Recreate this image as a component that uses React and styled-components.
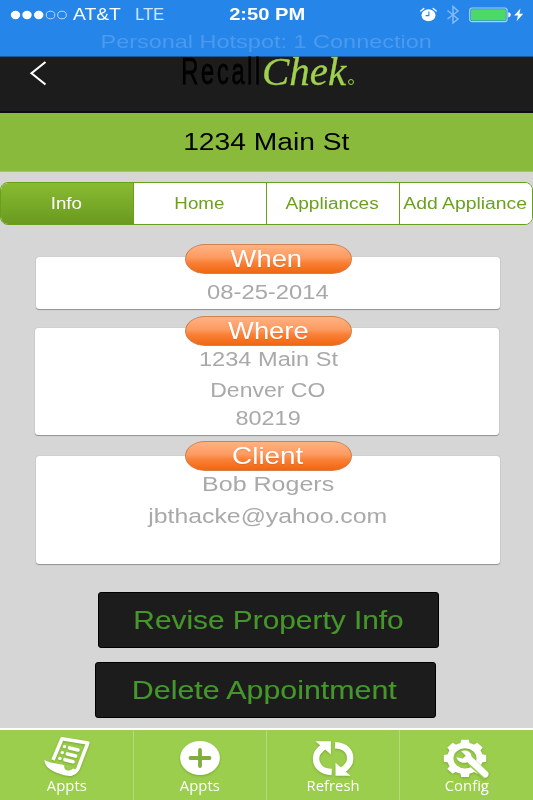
import styled, { createGlobalStyle } from "styled-components"

const GlobalStyle = createGlobalStyle`
    *{
        box-sizing:border-box;
    }
    body{
        margin:0;
        background-color:#d6d6d6;
        font-family:"Liberation Sans", Arial, sans-serif;
    }
`;
const Screen = styled.div`
    width:533px;
    height:800px;
    display:flex;
    flex-direction:column;
    overflow:hidden;
    background-color:#d6d6d6;
`;
/* wide lettering: only the glyphs are stretched, the box keeps its size */
const Label = styled.span`
    display:inline-block;
    white-space:nowrap;
    font-size:${(p) => p.$size}px;
    transform:scaleX(${(p) => p.$stretch || 1.18});
    transform-origin:${(p) => p.$origin || "center"};
`;

const StatusBar = styled.div`
    height:57px;
    flex:none;
    color:white;
    background-color:#2585e8;
    border-bottom:1px solid #1b5796;
`;
const StatusRow = styled.div`
    height:29px;
    display:grid;
    grid-template-columns:1fr auto 1fr;
    align-items:center;
    padding:0px 9px 0px 10px;
    line-height:29px;
`;
const Carrier = styled.div`
    display:flex;
    align-items:center;
    gap:5px;
`;
const Network = styled.div`
    margin-left:16px;
    color:#d3e6fb;
`;
const Clock = styled.div`
    font-weight:bold;
`;
const StatusIcons = styled.div`
    display:flex;
    align-items:center;
    justify-content:flex-end;
    svg{
        display:block;
    }
`;
const Hotspot = styled.div`
    height:27px;
    line-height:26px;
    text-align:center;
    color:#4b9aee;
`;

const Header = styled.div`
    height:56px;
    flex:none;
    display:grid;
    grid-template-columns:181px auto 1fr;
    align-items:start;
    background-color:#1c1c1c;
    border-bottom:2px solid #0d0a12;
`;
const BackButton = styled.div`
    padding:4px 0px 0px 29px;
    svg{
        display:block;
    }
`;
const Logo = styled.div`
    display:flex;
    height:30px;
    line-height:29px;
`;
const Recall = styled.div`
    width:81px;
    color:#020202;
    letter-spacing:3.6px;
    -webkit-text-stroke:0.8px #020202;
    text-shadow:-1px 0px 0px #2b2b2b;
`;
const Chek = styled.div`
    width:86px;
    color:#9fd14e;
    font-family:"Liberation Serif", serif;
    font-style:italic;
    -webkit-text-stroke:0.3px #9fd14e;
`;
const Registered = styled.div`
    width:6px;
    height:6px;
    margin-top:22px;
    border:1.5px solid #9fd14e;
    border-radius:50%;
`;

const Title = styled.div`
    height:59px;
    flex:none;
    line-height:59px;
    text-align:center;
    color:black;
    background-color:#8aba3b;
    border-bottom:1px solid #a5c070;
`;

const Tabs = styled.div`
    height:43px;
    flex:none;
    display:grid;
    grid-template-columns:133px 133px 133px 1fr;
    margin-top:10px;
    border:1px solid #69a01b;
    border-radius:8px;
    background-color:white;
    overflow:hidden;
`;
const Tab = styled.div`
    padding-right:2px;
    line-height:42px;
    text-align:center;
    color:${(p) => (p.$active ? "white" : "#6ba023")};
    background:${(p) => (p.$active ? "linear-gradient(#88bb31, #6a991f)" : "white")};
    border-right:1px solid #69a01b;
    &:last-child{
        border-right:none;
    }
`;

const Card = styled.div`
    width:464px;
    height:${(p) => p.$height}px;
    flex:none;
    display:flex;
    flex-direction:column;
    align-items:center;
    margin-top:${(p) => p.$top}px;
    margin-left:${(p) => p.$left}px;
    padding-left:${(p) => p.$shift || 0}px;
    background-color:white;
    border-radius:3px;
    box-shadow:0px 1px 1px rgb(0 0 0 / 30%), 0px 0px 1px rgb(0 0 0 / 30%);
`;
const Pill = styled.div`
    width:167px;
    height:30px;
    flex:none;
    margin-top:-${(p) => p.$lift}px;
    margin-bottom:-1px;
    padding-right:${(p) => p.$nudge || 0}px;
    line-height:28px;
    text-align:center;
    color:white;
    text-shadow:0px 1px 1px rgb(140 60 0 / 20%);
    background:linear-gradient(#ffb283 0%, #fd9a60 45%, #f98138 62%, #f26610 100%);
    border:1px solid #cf814f;
    border-radius:20px / 15px;
`;
const Line = styled.div`
    height:28px;
    flex:none;
    line-height:28px;
    margin-top:${(p) => p.$gap || 0}px;
    color:#a9a9a9;
`;

const ActionButton = styled.div`
    width:341px;
    height:56px;
    flex:none;
    margin-top:${(p) => p.$top}px;
    margin-left:${(p) => p.$left}px;
    padding-right:${(p) => p.$nudge || 0}px;
    line-height:54px;
    text-align:center;
    color:#46972b;
    -webkit-text-stroke:0.12px #46972b;
    background-color:#1c1c1c;
    border:1px solid black;
    border-radius:3px;
`;

const TabBar = styled.div`
    height:72px;
    flex:none;
    display:grid;
    grid-template-columns:134px 133px 133px 133px;
    margin-top:auto;
    border-top:2px solid white;
    background-color:#9bce4c;
`;
const TabBarItem = styled.div`
    display:flex;
    flex-direction:column;
    align-items:center;
    padding-top:6px;
    color:white;
    font-family:"Open Sans", sans-serif;
    line-height:18px;
    border-right:1px solid #b3da77;
    &:last-child{
        border-right:none;
    }
    svg{
        display:block;
        flex:none;
        margin-bottom:-3px;
        overflow:visible;
        filter:drop-shadow(0px 1px 1px rgb(60 100 0 / 35%));
    }
`;

const SignalDots = () => (
    <svg width="58" height="12" viewBox="0 0 58 12">
        {[5.5, 17, 28.7].map((x) => <ellipse key={x} cx={x} cy="6" rx="4.7" ry="4.2" fill="white" />)}
        {[40.5, 52].map((x) => <ellipse key={x} cx={x} cy="6" rx="4.3" ry="3.8" fill="none" stroke="#b9d8f9" />)}
    </svg>
)

const AlarmIcon = () => (
    <svg width="17" height="16" viewBox="0 0 17 16">
        <ellipse cx="8.5" cy="8.2" rx="7" ry="6" fill="white" />
        <path d="M0.8 4L3.8 1.4M16.2 4L13.2 1.4" stroke="white" strokeWidth="1.3" strokeLinecap="round" />
        <path d="M8.9 4.6V8.6H5.6" fill="none" stroke="#2585e8" strokeWidth="1.1" />
    </svg>
)

const BluetoothIcon = () => (
    <svg width="14" height="20" viewBox="0 0 14 20" style={{ marginLeft: 9 }}>
        <path d="M1.5 5.5L12 14L7 18V1.5L12 6L1.5 14" fill="none" stroke="#83baf3" strokeWidth="1.5" />
    </svg>
)

const BatteryIcon = () => (
    <svg width="42" height="16" viewBox="0 0 42 16" style={{ marginLeft: 9 }}>
        <rect x="0.7" y="1" width="37.4" height="13.6" rx="2.4" fill="#2585e8" stroke="#a6cdf7" strokeWidth="1.2" />
        <rect x="2" y="2.2" width="34.8" height="11.2" rx="1" fill="#4cd964" />
        <path d="M39.3 5.3Q41.8 5.7 41.8 7.8T39.3 10.3Z" fill="white" />
    </svg>
)

const BoltIcon = () => (
    <svg width="10" height="14" viewBox="0 0 10 14" style={{ marginLeft: 3 }}>
        <path d="M6.5 0.5L0.2 7.6H4L2.6 13.3L9.2 5.8H5.3Z" fill="white" />
    </svg>
)

const ScrollIcon = () => (
    <svg width="48" height="44" viewBox="0 0 48 44">
        <path d="M10 24L19 2.8L44.8 7L35 32.5Q32.5 37.8 26 38" fill="none" stroke="white" strokeWidth="3.6" strokeLinejoin="round" />
        <path d="M1.4 23.8C6 27.5 14 27 21.3 29.2C20.5 34.5 26 36.5 30 32.5L35.5 34.5C32 40 27 40.7 23 39.6C15 37.5 1.5 33.8 1.4 23.8Z" fill="white" />
        <path d="M26.5 11.9L35 14M24.3 18L32.6 20.1M22 23.7L30 25.7" stroke="white" strokeWidth="3.6" strokeLinecap="round" />
        <path d="M21.4 10.6h.2M19.2 16.6h.2M16.8 22.4h.2" stroke="white" strokeWidth="3.4" strokeLinecap="round" />
    </svg>
)

const PlusIcon = () => (
    <svg width="48" height="44" viewBox="0 0 48 44">
        <ellipse cx="24" cy="22" rx="19.9" ry="17" fill="white" />
        <path d="M14.5 22H33.5M24 14V30" stroke="#7fae3c" strokeWidth="3.8" strokeLinecap="round" />
    </svg>
)

const RefreshIcon = () => (
    <svg width="48" height="44" viewBox="0 0 48 44">
        <path d="M22.7 36C12 35.6 7 29.5 7 22.5C7 18 9 14.5 15 10.5" fill="none" stroke="white" strokeWidth="6.4" />
        <path d="M6.4 5.2H21.9V18.5Z" fill="white" />
        <path d="M26 9.2C36.5 9.7 41.2 15.5 41.2 22.5C41.2 27 39.3 30.5 33.2 34.5" fill="none" stroke="white" strokeWidth="6.4" />
        <path d="M26.5 26.7V39.8H41.6Z" fill="white" />
    </svg>
)

const GearIcon = () => (
    <svg width="48" height="44" viewBox="0 0 48 44">
        <g transform="translate(22 22.3) scale(1.14 1)">
            <circle r="12.9" fill="none" stroke="white" strokeWidth="5.6" />
            {[0, 45, 90, 135, 180, 225, 270, 315].map((a) => (
                <path key={a} d="M-4.4 -13L-3.4 -18.6H3.4L4.4 -13Z" transform={`rotate(${a})`} fill="white" />
            ))}
        </g>
        <path d="M27 25L44 40" stroke="#9bce4c" strokeWidth="8.5" />
        <path d="M18 15C22 13.5 28.5 15 28.5 20.5L45 36.3Q46.5 39 44 41.2Q42 42.3 40.5 40.8L24.5 26.3C19.5 28 14 25.5 13.6 21.3L19.8 22.6L22.7 19.8Z" fill="white" />
    </svg>
)

const tabs = [
    { name: "Info", stretch: 1.17 },
    { name: "Home", stretch: 1.17 },
    { name: "Appliances", stretch: 1.19 },
    { name: "Add Appliance", stretch: 1.21 },
]

const menu = [
    { name: "Appts", Icon: ScrollIcon },
    { name: "Appts", Icon: PlusIcon },
    { name: "Refresh", Icon: RefreshIcon },
    { name: "Config", Icon: GearIcon },
]

const App = () => {
    return (
        <Screen>
            <GlobalStyle />
            <StatusBar>
                <StatusRow>
                    <Carrier>
                        <SignalDots />
                        <Label $size={16.5} $stretch={1.17} $origin="left">AT&amp;T</Label>
                        <Network><Label $size={16.5} $stretch={1} $origin="left">LTE</Label></Network>
                    </Carrier>
                    <Clock><Label $size={16.5} $stretch={1.22}>2:50 PM</Label></Clock>
                    <StatusIcons>
                        <AlarmIcon />
                        <BluetoothIcon />
                        <BatteryIcon />
                        <BoltIcon />
                    </StatusIcons>
                </StatusRow>
                <Hotspot><Label $size={19} $stretch={1.235}>Personal Hotspot: 1 Connection</Label></Hotspot>
            </StatusBar>
            <Header>
                <BackButton>
                    <svg width="20" height="26" viewBox="0 0 20 26">
                        <path d="M16.5 1L2.5 12.3L16.5 23.5" fill="none" stroke="white" strokeWidth="2.1" />
                    </svg>
                </BackButton>
                <Logo>
                    <Recall><Label $size={36} $stretch={0.67} $origin="left">Recall</Label></Recall>
                    <Chek><Label $size={39} $stretch={1.05} $origin="left">Chek</Label></Chek>
                    <Registered />
                </Logo>
            </Header>
            <Title><Label $size={23.5} $stretch={1.2}>1234 Main St</Label></Title>
            <Tabs>
                {tabs.map((tab, i) => (
                    <Tab key={tab.name} $active={i === 0}>
                        <Label $size={16} $stretch={tab.stretch}>{tab.name}</Label>
                    </Tab>
                ))}
            </Tabs>
            <Card $top={32} $left={36} $height={52}>
                <Pill $lift={13} $nudge={3}><Label $size={24} $stretch={1.14}>When</Label></Pill>
                <Line $gap={5}><Label $size={19.5} $stretch={1.22}>08-25-2014</Label></Line>
            </Card>
            <Card $top={19} $left={34.5} $height={107} $shift={3}>
                <Pill $lift={12}><Label $size={24} $stretch={1.14}>Where</Label></Pill>
                <Line><Label $size={19.5} $stretch={1.21}>1234 Main St</Label></Line>
                <Line $gap={3}><Label $size={19.5} $stretch={1.18}>Denver CO</Label></Line>
                <Line><Label $size={19.5} $stretch={1.2}>80219</Label></Line>
            </Card>
            <Card $top={21} $left={36} $height={108}>
                <Pill $lift={15} $nudge={1}><Label $size={24} $stretch={1.16}>Client</Label></Pill>
                <Line><Label $size={20.5} $stretch={1.22}>Bob Rogers</Label></Line>
                <Line $gap={4}><Label $size={20.5} $stretch={1.21}>jbthacke@yahoo.com</Label></Line>
            </Card>
            <ActionButton $top={28} $left={98}>
                <Label $size={25.5} $stretch={1.17}>Revise Property Info</Label>
            </ActionButton>
            <ActionButton $top={14} $left={95} $nudge={2}>
                <Label $size={25.5} $stretch={1.19}>Delete Appointment</Label>
            </ActionButton>
            <TabBar>
                {menu.map(({ name, Icon }, i) => (
                    <TabBarItem key={i}>
                        <Icon />
                        <Label $size={14} $stretch={1.06}>{name}</Label>
                    </TabBarItem>
                ))}
            </TabBar>
        </Screen>
    )
}

export default App
